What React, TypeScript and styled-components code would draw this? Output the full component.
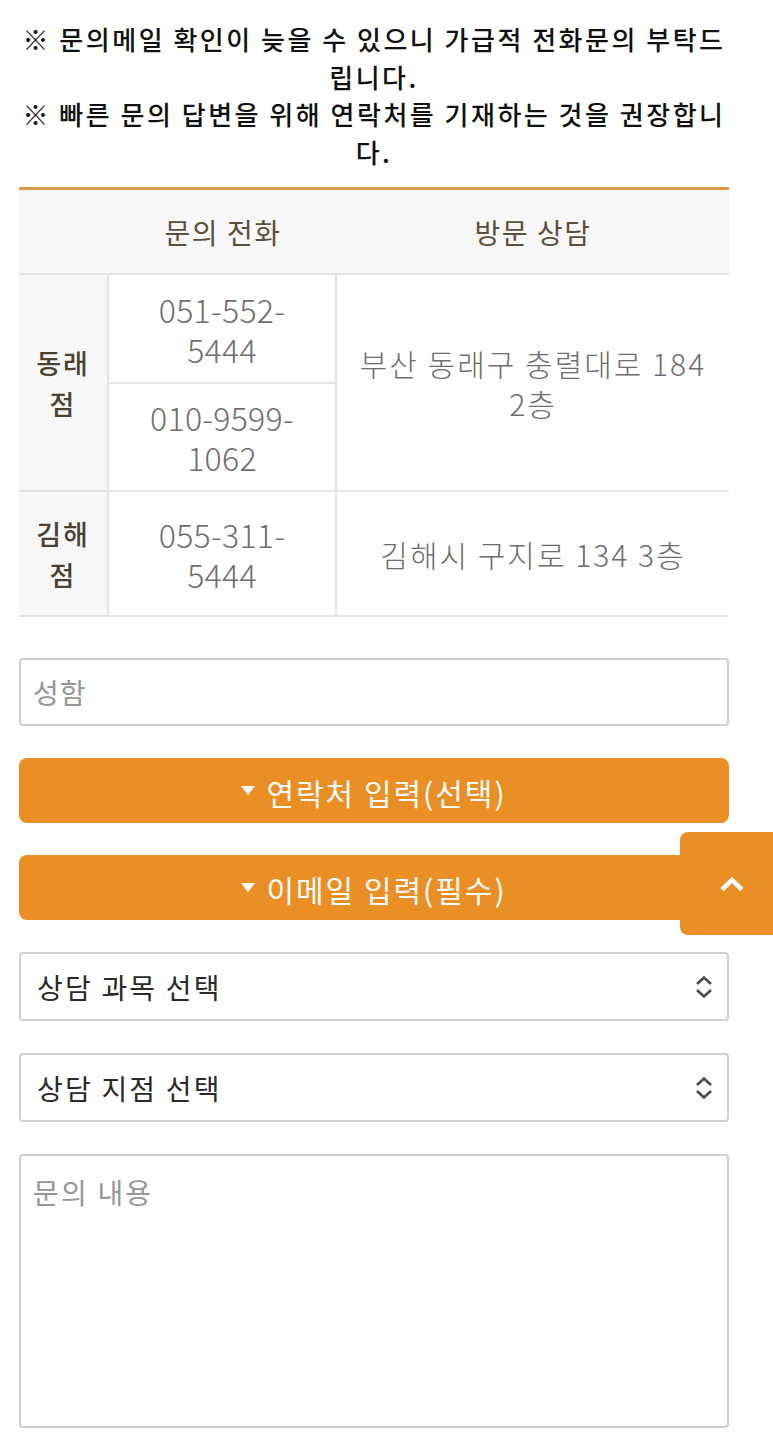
import { FC } from 'react';
import styled, { createGlobalStyle } from 'styled-components'

const Global = createGlobalStyle`
  html, body {
    margin: 0;
    padding: 0;
    background: #fff;
  }
  body {
    font-family: "Noto Sans CJK KR", "Noto Sans", sans-serif;
    color: #333;
  }
  * {
    box-sizing: border-box;
  }
`

const Page = styled.div`
  position: relative;
  width: 773px;
  padding: 20px 44px 14px 19px;
`

const Notice = styled.div`
  text-align: center;
  font-size: 26px;
  font-weight: 500;
  line-height: 37.5px;
  letter-spacing: 2.5px;
  color: #111;
  margin-bottom: 17px;
`

const Table = {
  Wrap: styled.div`
    border-top: 3px solid #e09a4a;
    display: grid;
    grid-template-columns: 90px 228px 1fr;
    border-bottom: 2px solid #e4e4e4;
  `,
  Head: styled.div`
    height: 85px;
    background: #f7f7f7;
    display: flex;
    align-items: center;
    justify-content: center;
    font-size: 28px;
    color: #5b4f3e;
    letter-spacing: 1.5px;
    border-bottom: 2px solid #e4e4e4;
  `,
  Branch: styled.div<{ $rows: number }>`
    grid-row: span ${p => p.$rows};
    background: #f7f7f7;
    display: flex;
    align-items: center;
    justify-content: center;
    text-align: center;
    padding: 0 12px;
    font-size: 27px;
    font-weight: 500;
    line-height: 41px;
    letter-spacing: 2px;
    color: #4b4133;
    border-right: 2px solid #e4e4e4;
  `,
  Phone: styled.div<{ $h: number; $last?: boolean }>`
    height: ${p => p.$h}px;
    display: flex;
    align-items: center;
    justify-content: center;
    text-align: center;
    padding: 0 30px;
    font-size: 32px;
    font-weight: 300;
    line-height: 40px;
    letter-spacing: 0.3px;
    color: #6e6e6e;
    border-right: 2px solid #e4e4e4;
    border-bottom: ${p => (p.$last ? 'none' : '2px solid #e4e4e4')};
  `,
  Addr: styled.div<{ $rows: number }>`
    grid-row: span ${p => p.$rows};
    display: flex;
    align-items: center;
    justify-content: center;
    text-align: center;
    padding: 0 20px;
    font-size: 30px;
    font-weight: 300;
    line-height: 40px;
    letter-spacing: 2px;
    color: #6e6e6e;
  `,
  Sep: styled.div`
    grid-column: 1 / -1;
    height: 2px;
    background: #e4e4e4;
  `,
}

const Form = styled.div`
  display: flex;
  flex-direction: column;
  gap: 32px;
  margin-top: 41px;
`

const Input = styled.input`
  display: block;
  width: 100%;
  height: 68px;
  border: 2px solid #cfcfcf;
  border-radius: 4px;
  padding: 0 12px;
  font-family: inherit;
  font-size: 28px;
  letter-spacing: 1px;
  color: #333;
  &::placeholder {
    color: #969696;
  }
`

const Toggle = styled.button`
  display: flex;
  align-items: center;
  justify-content: center;
  gap: 11px;
  width: 100%;
  height: 65px;
  border: none;
  border-radius: 8px;
  background: #ea8f26;
  color: #fff;
  font-family: inherit;
  font-size: 30px;
  letter-spacing: 2px;
  padding: 3px 0 0;
`

const Tri = styled.span`
  display: inline-block;
  width: 0;
  height: 0;
  border-left: 7px solid transparent;
  border-right: 7px solid transparent;
  border-top: 9px solid #fff;
  margin-top: -4px;
`

const SelectWrap = styled.div`
  position: relative;
`

const Select = styled.select`
  appearance: none;
  display: block;
  width: 100%;
  height: 69px;
  border: 2px solid #cfcfcf;
  border-radius: 4px;
  background: #fff;
  padding: 0 16px;
  font-family: inherit;
  font-size: 28px;
  letter-spacing: 2.2px;
  color: #2a2a2a;
`

const SelectIcon = styled.svg`
  position: absolute;
  right: 15px;
  top: 50%;
  transform: translateY(-50%);
  pointer-events: none;
`

const TextArea = styled.textarea`
  display: block;
  width: 100%;
  height: 274px;
  border: 2px solid #cfcfcf;
  border-radius: 4px;
  padding: 16px 12px;
  resize: none;
  font-family: inherit;
  font-size: 28px;
  letter-spacing: 2.2px;
  line-height: 40px;
  &::placeholder {
    color: #969696;
  }
`

const TopBtn = styled.button`
  position: absolute;
  top: 832px;
  right: 0;
  width: 93px;
  height: 103px;
  border: none;
  border-radius: 8px 0 0 8px;
  background: #ea8f26;
  display: flex;
  align-items: center;
  justify-content: center;
  padding: 0 0 0 10px;
`

const ChevronUp: FC = () => (
  <svg width="26" height="16" viewBox="0 0 26 16" aria-hidden="true">
    <polyline points="3,13.5 13,4 23,13.5" fill="none" stroke="#fff" strokeWidth="4.5" />
  </svg>
)

const UpDown: FC = () => (
  <SelectIcon width="20" height="24" viewBox="0 0 20 24" aria-hidden="true">
    <polyline points="3,9 10,2.5 17,9" fill="none" stroke="#4a4a4a" strokeWidth="2.6" />
    <polyline points="3,15 10,21.5 17,15" fill="none" stroke="#4a4a4a" strokeWidth="2.6" />
  </SelectIcon>
)

export const App: FC = () => {
  return (
    <Page>
      <Global />
      <Notice>
        ※ 문의메일 확인이 늦을 수 있으니 가급적 전화문의 부탁드립니다.
        <br />
        ※ 빠른 문의 답변을 위해 연락처를 기재하는 것을 권장합니다.
      </Notice>

      <Table.Wrap>
        <Table.Head />
        <Table.Head>문의 전화</Table.Head>
        <Table.Head>방문 상담</Table.Head>

        <Table.Branch $rows={2}>동래점</Table.Branch>
        <Table.Phone $h={109}>051-552-5444</Table.Phone>
        <Table.Addr $rows={2}>부산 동래구 충렬대로 184 2층</Table.Addr>
        <Table.Phone $h={106} $last>010-9599-1062</Table.Phone>

        <Table.Sep />

        <Table.Branch $rows={1}>김해점</Table.Branch>
        <Table.Phone $h={123} $last>055-311-5444</Table.Phone>
        <Table.Addr $rows={1}>김해시 구지로 134 3층</Table.Addr>
      </Table.Wrap>

      <Form>
        <Input placeholder="성함" />
        <Toggle>
          <Tri />
          연락처 입력(선택)
        </Toggle>
        <Toggle>
          <Tri />
          이메일 입력(필수)
        </Toggle>
        <SelectWrap>
          <Select defaultValue="">
            <option value="">상담 과목 선택</option>
          </Select>
          <UpDown />
        </SelectWrap>
        <SelectWrap>
          <Select defaultValue="">
            <option value="">상담 지점 선택</option>
          </Select>
          <UpDown />
        </SelectWrap>
        <TextArea placeholder="문의 내용" />
      </Form>

      <TopBtn aria-label="맨 위로">
        <ChevronUp />
      </TopBtn>
    </Page>
  );
};

export default App
